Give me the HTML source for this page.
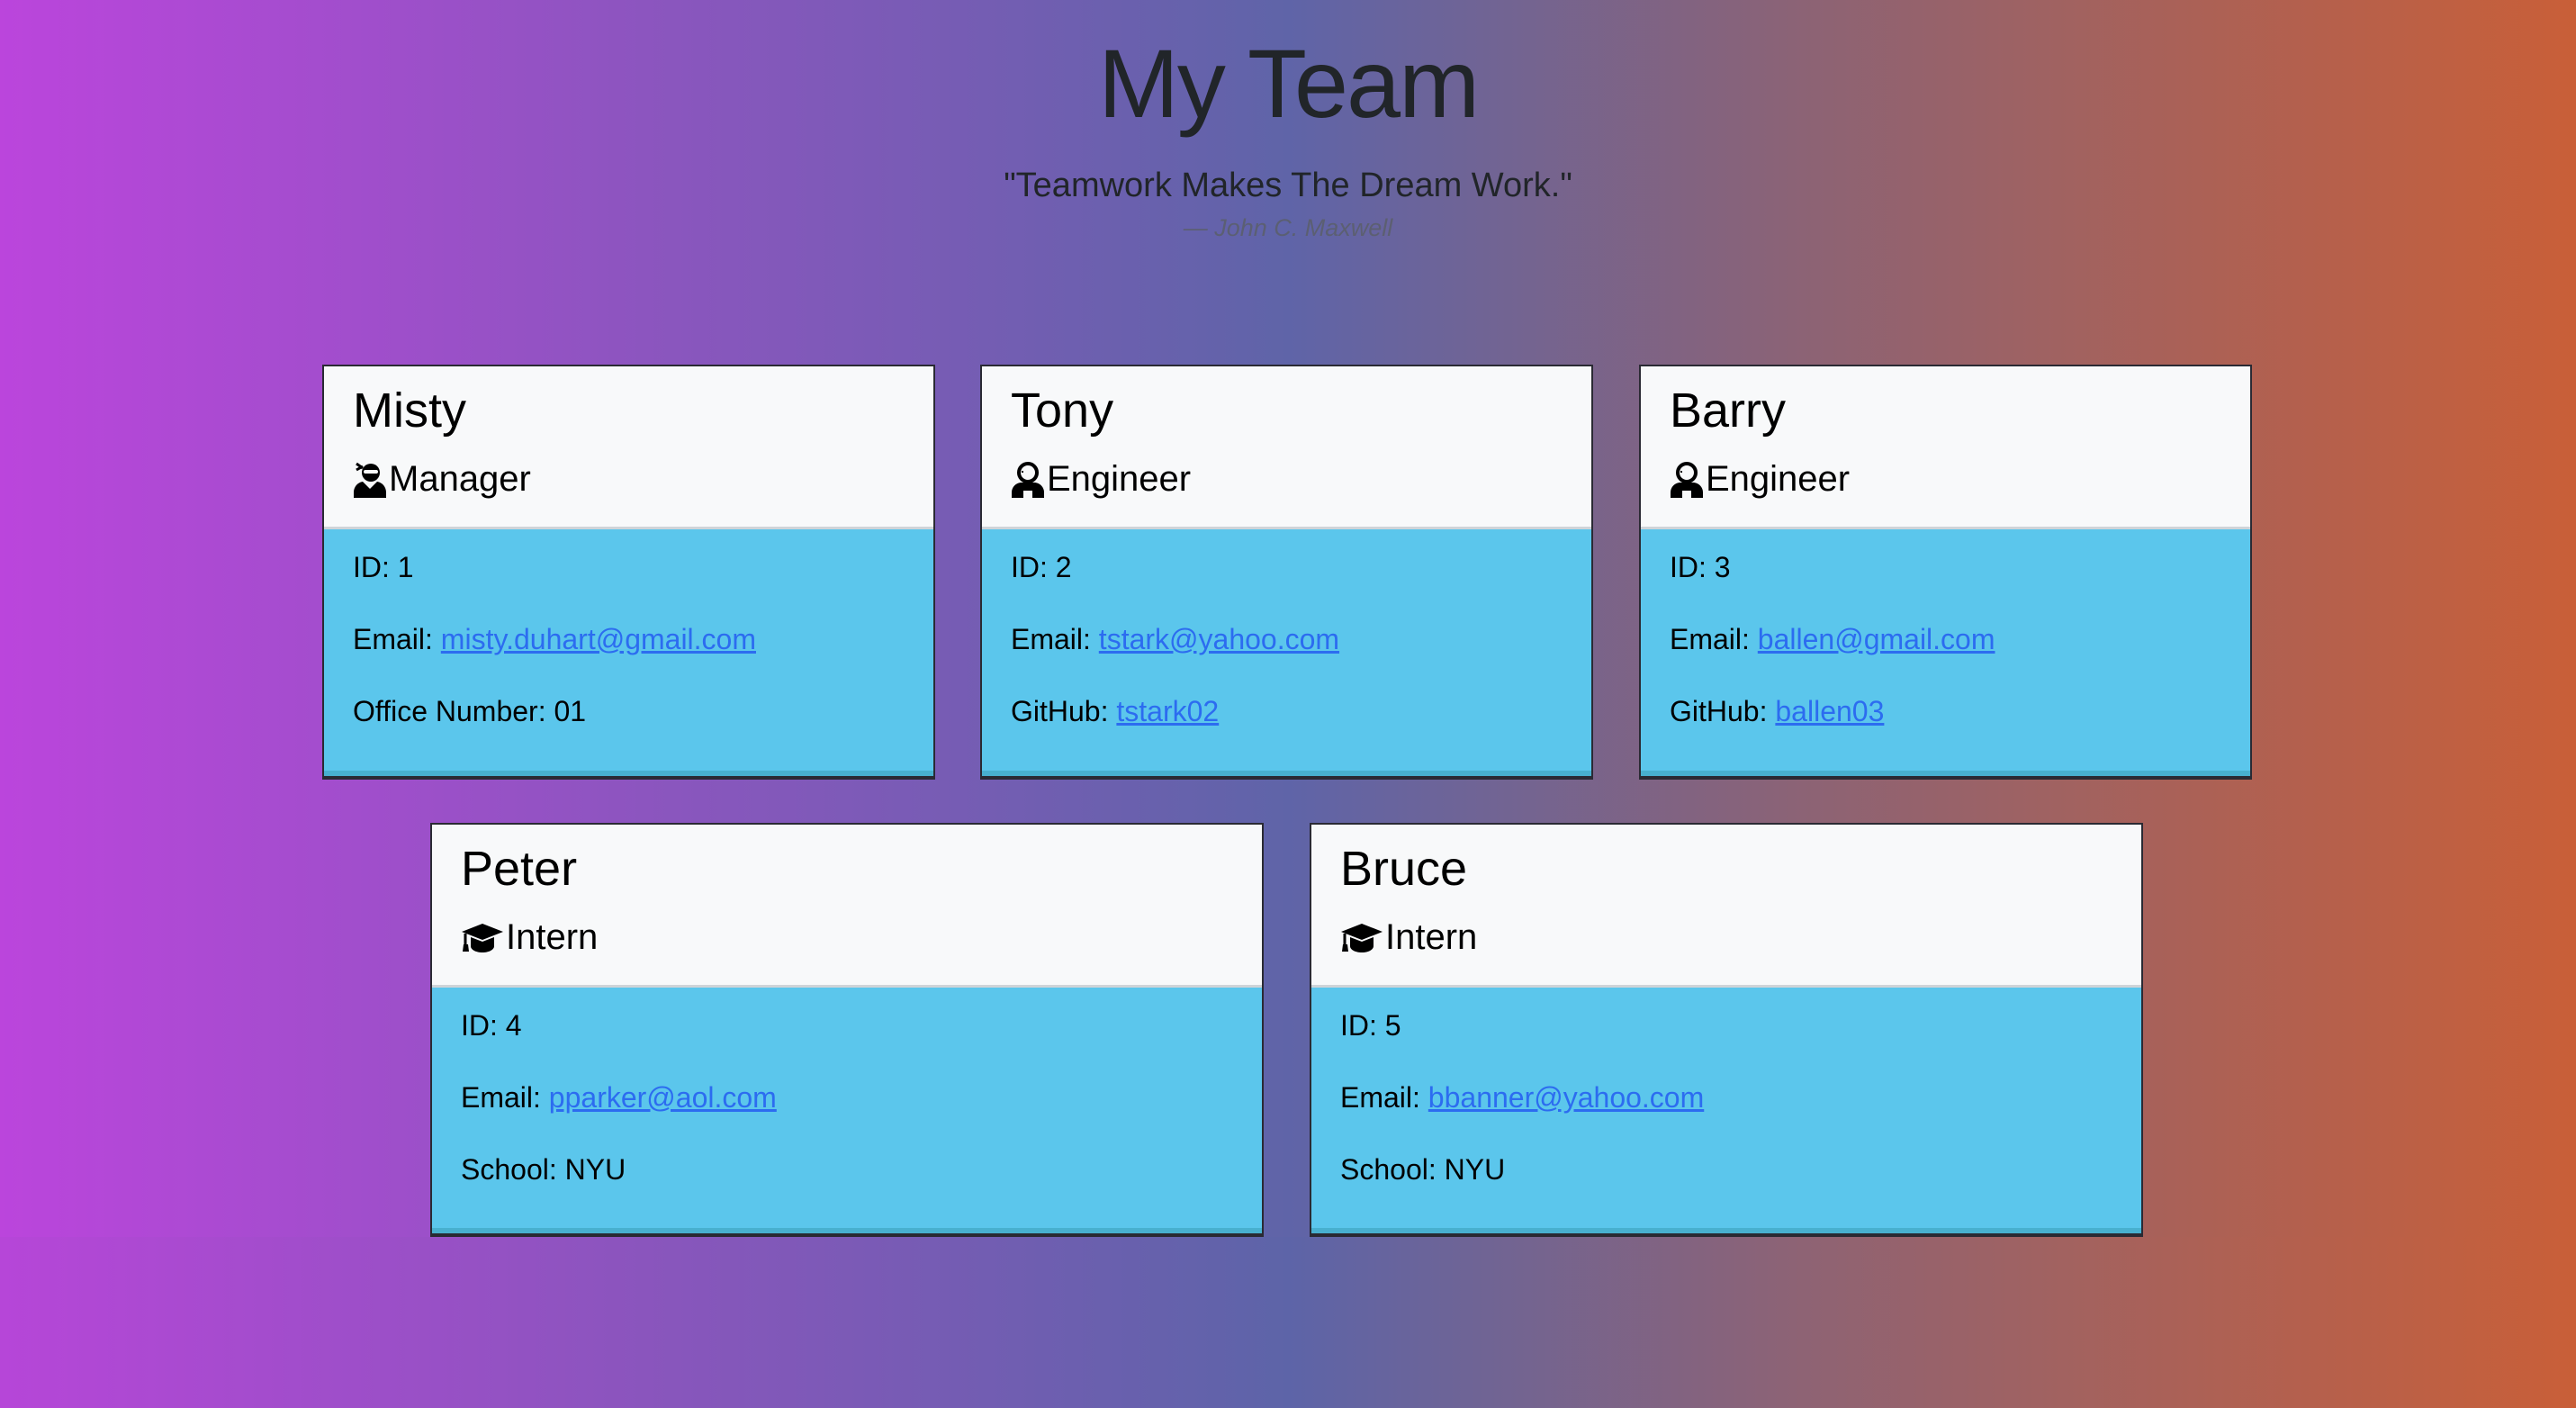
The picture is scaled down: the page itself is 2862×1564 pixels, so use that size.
<!DOCTYPE html>
<html><head><meta charset="utf-8"><style>
html{margin:0;height:100%;background:linear-gradient(to right,#b646d8 0%,#8a55bd 25%,#5d64a8 50%,#8e6374 70%,#c95f38 100%);}
body{margin:0;height:1374px;background:linear-gradient(to right,#bb45dc 0%,#8c55bf 25%,#5f64a8 50%,#8c6375 70%,#c95f38 100%);font-family:"Liberation Sans",sans-serif;position:relative;overflow:hidden}
h1{position:absolute;left:0;right:0;top:30px;margin:0;text-align:center;font-weight:300;font-size:108px;color:#212529;letter-spacing:-2px}
.q{position:absolute;left:0;right:0;top:185px;text-align:center;font-size:38px;color:#212529}
.a{position:absolute;left:0;right:0;top:238px;text-align:center;font-size:27px;color:#5a5f66;font-style:italic;opacity:.8}
.card{position:absolute;box-sizing:border-box;border:2px solid #2a2a33;border-bottom:4px solid #2a2a33;background:#5bc6ec;box-shadow:inset 0 -6px 0 #48b0cf}
.hd{height:181px;background:#f8f9fa;border-bottom:3px solid #cfd4d8;box-sizing:border-box;position:relative}
.nm{position:absolute;left:32px;top:18px;font-size:54px;font-weight:500;color:#000}
.rl{position:absolute;left:32px;top:103px;font-size:40px;color:#000;display:flex;align-items:center}
.rl svg{width:38px;height:40px;margin-right:2px}
.bd{padding:2px 0 0 32px;font-size:32px;color:#000}
.bd div{height:80px;line-height:80px}
a{color:#2c6cf0;text-decoration:underline}
</style></head><body>
<h1>My Team</h1>
<div class="q">"Teamwork Makes The Dream Work."</div>
<div class="a">— John C. Maxwell</div>

<div class="card" style="left:358px;top:405px;width:681px;height:461px">
<div class="hd"><div class="nm">Misty</div><div class="rl"><svg viewBox="0 0 38 40"><path d="M4 2l7 5M4 9l7-4" stroke="#000" stroke-width="3"/><circle cx="20" cy="12" r="10"/><rect x="12" y="9" width="16" height="4" rx="2" fill="#f8f9fa"/><path d="M1 40v-6c0-6 4-11 10-12l8 8 8-8c6 1 10 6 10 12v6z"/></svg>Manager</div></div>
<div class="bd"><div>ID: 1</div><div>Email: <a>misty.duhart@gmail.com</a></div><div>Office Number: 01</div></div></div>

<div class="card" style="left:1089px;top:405px;width:681px;height:461px">
<div class="hd"><div class="nm">Tony</div><div class="rl"><svg viewBox="0 0 38 40"><circle cx="19" cy="12" r="10" fill="none" stroke="#000" stroke-width="4"/><path d="M12 11h2M13 10v2" stroke="#000" stroke-width="2"/><path d="M1 40v-6c0-6 5-11 11-11h14c6 0 11 5 11 11v6z"/><rect x="14" y="32" width="10" height="8" fill="#f8f9fa"/></svg>Engineer</div></div>
<div class="bd"><div>ID: 2</div><div>Email: <a>tstark@yahoo.com</a></div><div>GitHub: <a>tstark02</a></div></div></div>

<div class="card" style="left:1821px;top:405px;width:681px;height:461px">
<div class="hd"><div class="nm">Barry</div><div class="rl"><svg viewBox="0 0 38 40"><circle cx="19" cy="12" r="10" fill="none" stroke="#000" stroke-width="4"/><path d="M12 11h2M13 10v2" stroke="#000" stroke-width="2"/><path d="M1 40v-6c0-6 5-11 11-11h14c6 0 11 5 11 11v6z"/><rect x="14" y="32" width="10" height="8" fill="#f8f9fa"/></svg>Engineer</div></div>
<div class="bd"><div>ID: 3</div><div>Email: <a>ballen@gmail.com</a></div><div>GitHub: <a>ballen03</a></div></div></div>

<div class="card" style="left:478px;top:914px;width:926px;height:460px">
<div class="hd"><div class="nm">Peter</div><div class="rl"><svg viewBox="0 0 48 40" style="width:48px"><path d="M24 4L1 13l23 9 23-9z"/><path d="M11 19v10c0 4 6 7 13 7s13-3 13-7V19l-13 5z"/><path d="M5 15v12" stroke="#000" stroke-width="3"/><path d="M3 27h5l1 8H2z"/></svg>Intern</div></div>
<div class="bd"><div>ID: 4</div><div>Email: <a>pparker@aol.com</a></div><div>School: NYU</div></div></div>

<div class="card" style="left:1455px;top:914px;width:926px;height:460px">
<div class="hd"><div class="nm">Bruce</div><div class="rl"><svg viewBox="0 0 48 40" style="width:48px"><path d="M24 4L1 13l23 9 23-9z"/><path d="M11 19v10c0 4 6 7 13 7s13-3 13-7V19l-13 5z"/><path d="M5 15v12" stroke="#000" stroke-width="3"/><path d="M3 27h5l1 8H2z"/></svg>Intern</div></div>
<div class="bd"><div>ID: 5</div><div>Email: <a>bbanner@yahoo.com</a></div><div>School: NYU</div></div></div>
</body></html>
